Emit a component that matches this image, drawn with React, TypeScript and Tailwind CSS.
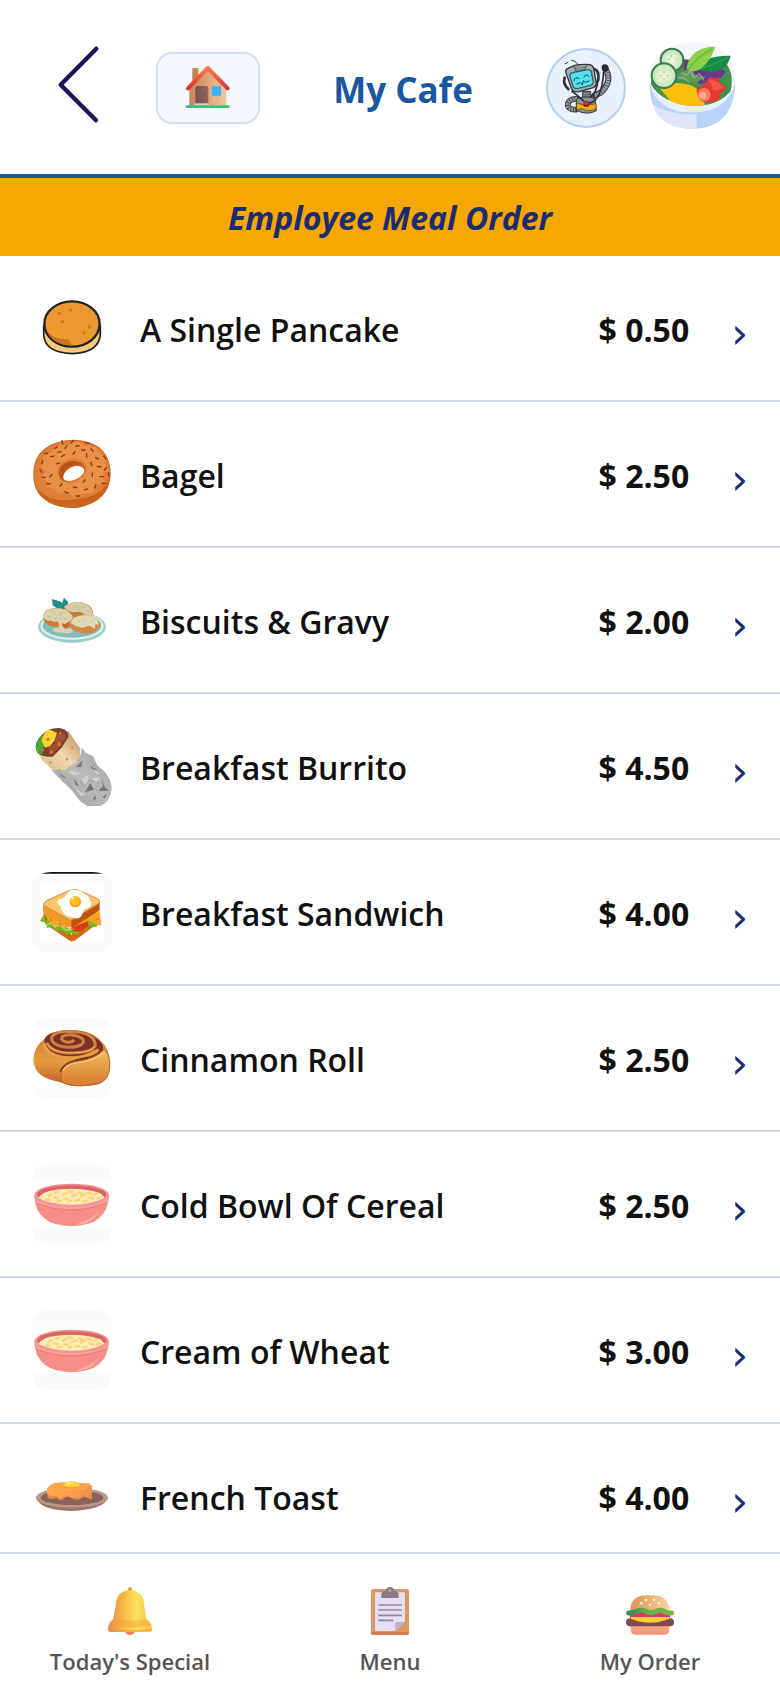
import type { ReactNode } from "react";

function BackIcon() {
  return (
    <svg viewBox="96 120 288 288" className="size-24" aria-hidden="true">
      <path d="M289 146 L182 254 L288 361" fill="none" stroke="#1c1458" strokeWidth="13" strokeLinecap="round" strokeLinejoin="round" />
    </svg>
  );
}

function HouseIcon() {
  return (
    <svg viewBox="554 192 144 144" className="size-12" aria-hidden="true">
      <defs>
        <linearGradient id="house-wall" x1="0" x2="1">
          <stop offset="0" stopColor="#c4865a" />
          <stop offset=".5" stopColor="#dfa47a" />
          <stop offset="1" stopColor="#edcaa4" />
        </linearGradient>
        <linearGradient id="house-roof" x1="0" y1="0" x2="0" y2="1">
          <stop offset="0" stopColor="#ff7a3c" />
          <stop offset="1" stopColor="#dc3238" />
        </linearGradient>
        <linearGradient id="house-door" x1="0" x2="1">
          <stop offset="0" stopColor="#7a5050" />
          <stop offset="1" stopColor="#93655a" />
        </linearGradient>
      </defs>
      <path d="M579 204 H597 V232 L579 248Z" fill="#bd8650" />
      <path d="M570 262 L625 208 L681 262 V317 H570Z" fill="url(#house-wall)" />
      <path d="M588 314 V265 q0 -7 7 -7 H620 q7 0 7 7 V314Z" fill="url(#house-door)" />
      <circle cx="617" cy="285" r="2" fill="#5b3a3c" />
      <path d="M586 310 H629 V317 H586Z" fill="#d9cfd6" />
      <rect x="635" y="257" width="31" height="31" rx="2" fill="#e9b890" />
      <rect x="637" y="259" width="28" height="28" rx="2" fill="#3bb2f5" />
      <path d="M566 265 L625 204 L685 265" fill="none" stroke="url(#house-roof)" strokeWidth="12" strokeLinecap="round" strokeLinejoin="round" />
      <rect x="559" y="316" width="132" height="8" rx="4" fill="#3ec46d" />
    </svg>
  );
}

function RobotIcon() {
  return (
    <svg viewBox="474 150 228 228" className="size-full" aria-hidden="true">
      <g strokeLinecap="round" strokeLinejoin="round">
        <path d="M564 197 Q562 184 545 181 M534 187 L526 191" fill="none" stroke="#33363b" strokeWidth="3" />
        <path d="M614 286 Q642 279 652 250 Q660 232 648 210" fill="none" stroke="#34363b" strokeWidth="18" />
        <path d="M614 286 Q642 279 652 250 Q660 232 648 210" fill="none" stroke="#a6a9ae" strokeWidth="12" strokeDasharray="6 2" strokeLinecap="butt" />
        <path d="M635 205 Q633 194 644 193 Q655 193 656 204 Q655 215 645 217 Q636 215 635 205Z" fill="#2c2e33" />
        <path d="M562 296 Q534 298 533 314 Q534 329 556 329" fill="none" stroke="#34363b" strokeWidth="17" />
        <path d="M562 296 Q534 298 533 314 Q534 329 556 329" fill="none" stroke="#94979c" strokeWidth="12" strokeDasharray="6 2" strokeLinecap="butt" />
        <path d="M560 297 Q588 283 615 297 L619 332 Q592 347 561 332Z" fill="#8e9095" stroke="#36383d" strokeWidth="3" />
        <path d="M560 309 L578 314 Q588 324 600 314 L618 311 V328 Q602 333 590 332 L577 326 L560 329Z" fill="#f0a90f" stroke="#4a3a20" strokeWidth="2" />
        <path d="M579 274 H602 V291 H579Z" fill="#777a80" stroke="#34363b" strokeWidth="3" />
        <path d="M524 233 Q518 252 535 267 M613 207 Q628 212 625 238 Q620 254 611 254" fill="none" stroke="#303237" strokeWidth="8" />
        <path d="M527 216 Q526 209 534 205 L554 196 Q576 192 599 194 Q609 196 611 205 L619 250 Q619 259 610 263 L567 275 Q551 278 545 267Z" fill="#a9acb1" stroke="#33363b" strokeWidth="4" />
        <path d="M539 226 Q540 219 548 218 L593 209 Q602 208 604 216 L610 246 Q609 254 602 256 L562 266 Q552 267 549 258Z" fill="#55e0ed" stroke="#2b6872" strokeWidth="4" />
        <path d="M552 200 L559 215 L583 210 L590 197" fill="#8c8f94" stroke="#44474c" strokeWidth="3" />
        <path d="M552 242 Q553 229 567 235 M582 231 Q588 219 597 229 M561 252 L571 248 L577 255 L580 242 L586 247 L597 243" fill="none" stroke="#174d5d" strokeWidth="3" />
        <path d="M546 274 Q566 288 580 302 M603 290 Q621 275 623 241 M597 310 Q636 302 641 216" fill="none" stroke="#292c31" strokeWidth="5" />
        <circle cx="589" cy="311" r="9" fill="#5b2a2c" />
        <circle cx="589" cy="310" r="6" fill="#ee2428" />
      </g>
    </svg>
  );
}

function SaladIcon() {
  return (
    <svg viewBox="738 96 336 336" className="size-28" aria-hidden="true">
      <defs>
        <clipPath id="salad-base"><path d="M779 246 Q776 384 908 387 Q1034 384 1036 244 Q1020 322 908 320 Q800 318 779 246Z" /></clipPath>
        <radialGradient id="cucumber"><stop offset="0" stopColor="#f4f8d9" /><stop offset=".6" stopColor="#d8edc9" /><stop offset="1" stopColor="#c4e5bd" /></radialGradient>
      </defs>
      <ellipse cx="908" cy="224" rx="128" ry="96" fill="#f6f5fa" />
      <path d="M782 252 Q790 182 870 178 L1004 184 Q1034 220 1022 273 Q985 320 905 318 Q815 309 782 252Z" fill="#41924e" />
      <path d="M878 178 L970 191 L1008 215 L989 239 L930 252 L884 220Z" fill="#6b3889" />
      <path d="M866 219 L901 206 L917 226 L947 230 L918 249 L868 239Z" fill="#5c9d4e" />
      <path d="M875 218 l15 9 l10 -16 l12 22 l16 -12 l14 21 M862 232 l20 2 l16 13" fill="none" stroke="#c4aad0" strokeWidth="3" />
      <path d="M917 211 Q938 165 1022 167 Q1010 213 969 215Z" fill="#168b47" />
      <path d="M925 209 Q966 196 1013 173" stroke="#45a759" strokeWidth="3" fill="none" />
      <path d="M889 207 Q899 140 976 140 Q954 205 908 215Z" fill="#8bd04b" />
      <path d="M896 208 Q921 170 967 146" stroke="#6ab63c" strokeWidth="4" fill="none" />
      <path d="M811 267 Q839 240 889 253 Q936 260 944 315 Q890 326 842 304Z" fill="#f9bf0b" />
      <path d="M947 251 Q956 224 974 236 L990 231 L989 246 L1011 264 L991 281 L989 296 Q966 312 939 306 Q918 286 920 266Z" fill="#e63b33" />
      <path d="M955 237 L982 245 L1004 263 L972 274Z" fill="#f25545" />
      <circle cx="942" cy="284" r="20" fill="#f67d62" />
      <circle cx="939" cy="286" r="11" fill="#ffab8c" />
      <circle cx="846" cy="180" r="37" fill="#367d52" />
      <circle cx="846" cy="180" r="31" fill="url(#cucumber)" />
      <circle cx="822" cy="227" r="40" fill="#367d52" />
      <circle cx="822" cy="227" r="34" fill="url(#cucumber)" />
      <path d="M822 213 v8 M822 233 v8 M809 227 h8 M828 227 h8 M844 165 v7 M834 177 h6 M857 178 h6" stroke="#a9c99d" strokeWidth="3" />
      <path d="M779 246 Q776 384 908 387 Q1034 384 1036 244 Q1020 322 908 320 Q800 318 779 246Z" fill="#b9d3fb" />
      <g clipPath="url(#salad-base)">
        <path d="M776 307 Q845 350 920 342 V400 H776Z" fill="#dfe5f8" />
        <path d="M779 248 Q800 339 910 337 Q1010 338 1038 247 V230 H779Z" fill="#e8effc" />
      </g>
    </svg>
  );
}

function PancakeIcon() {
  return (
    <svg viewBox="36 24 240 240" className="size-20" aria-hidden="true">
      <path d="M71 139 V163 Q73 218 156 221 Q237 218 241 163 V139Z" fill="#f5ca7c" stroke="#1f2320" strokeWidth="5" />
      <ellipse cx="156" cy="132" rx="83" ry="68" fill="#ec992f" stroke="#1f2320" strokeWidth="7" />
      <path d="M77 143 Q88 176 144 178 Q154 187 155 196 Q92 195 77 143Z" fill="#ca7425" />
      <g fill="#c97a27"><circle cx="152" cy="90" r="5" /><circle cx="117" cy="100" r="5" /><circle cx="127" cy="125" r="5" /><circle cx="208" cy="141" r="5" /><circle cx="192" cy="159" r="5" /></g>
    </svg>
  );
}

function BagelIcon() {
  const seeds = [
    [108, 503, -30], [138, 501, -50], [172, 498, 0], [201, 489, 10], [216, 510, 50], [190, 510, 0], [162, 519, -55],
    [129, 527, -35], [97, 529, -10], [67, 547, -70], [114, 550, -20], [200, 526, 85], [231, 535, 25], [214, 552, 75],
    [237, 560, 5], [254, 532, 50], [256, 567, -50], [217, 584, 90], [245, 590, 0], [193, 603, -55], [226, 619, -65],
    [198, 628, -20], [165, 622, 5], [123, 615, -50], [93, 587, -50], [63, 573, 55], [86, 611, 5], [139, 637, 25],
    [173, 648, 0], [71, 592, 0], [266, 583, 80], [251, 610, 0], [127, 487, 75], [157, 485, -50], [78, 520, 0], [118, 516, -10],
  ];
  return (
    <svg viewBox="36 462 240 240" className="size-20" aria-hidden="true">
      <path fillRule="evenodd" d="M40 588 Q37 514 106 488 Q176 467 232 498 Q273 526 272 585 Q268 664 176 683 Q93 690 55 640 Q40 615 40 588Z M130 588 Q126 605 155 603 Q191 595 193 574 Q192 557 165 558 Q135 567 130 588Z" fill="#c9631d" />
      <path fillRule="evenodd" d="M42 587 Q40 519 107 490 Q175 470 229 500 Q268 527 270 575 Q265 645 177 656 Q98 674 55 629 Q42 608 42 587Z M118 579 Q114 606 146 604 Q190 595 195 566 Q192 542 154 543 Q119 552 118 579Z" fill="#e07d38" />
      <path d="M62 559 L72 530 L94 516 L113 497 L145 494 L174 485 L203 500 L226 498 L234 517 L253 528 L255 549 L267 570 L249 579 L251 607 L230 618 L214 639 L181 642 L163 654 L145 637 L115 643 L104 626 L80 622 L84 605 L65 592 L78 574Z M110 574 Q114 607 149 611 Q193 600 202 569 Q196 535 154 534 Q119 543 110 574Z" fillRule="evenodd" fill="#ea9149" />
      <path d="M117 579 Q118 553 150 543 Q184 540 195 564 Q187 552 164 555 Q133 562 129 588 Q126 599 137 604 Q119 598 117 579Z" fill="#b95215" />
      <g stroke="#843b19" strokeWidth="4" strokeLinecap="round">
        {seeds.map(([x, y, r]) => <path key={`${x}-${y}`} d="M-5 0 H5" transform={`translate(${x} ${y}) rotate(${r})`} />)}
      </g>
    </svg>
  );
}

function BiscuitsIcon() {
  return (
    <svg viewBox="36 30 240 240" className="size-20" aria-hidden="true">
      <ellipse cx="156" cy="171" rx="102" ry="47" fill="#a3cbca" />
      <ellipse cx="156" cy="168" rx="95" ry="41" fill="#e0efec" />
      <ellipse cx="156" cy="167" rx="88" ry="36" fill="#82bdb9" />
      <path d="M96 87 L119 94 L126 99 L132 83 L145 97 L137 118 L111 115 L98 106Z" fill="#288b8b" />
      <path d="M133 110 Q150 94 180 96 Q222 104 219 135 Q188 150 143 136Z" fill="#c97a3b" />
      <path d="M132 110 Q151 94 181 96 Q219 105 218 136 Q205 142 195 134 Q181 122 166 127 Q145 128 132 110Z" fill="#d5cca5" />
      <path d="M70 135 Q75 111 119 114 Q156 121 158 148 Q151 172 117 172 Q76 170 70 148Z" fill="#d07a37" />
      <path d="M69 138 Q77 112 117 115 Q155 119 158 146 Q151 155 139 158 L132 176 Q158 172 158 182 Q154 193 130 188 Q103 189 97 180 Q101 172 116 174 V159 Q109 150 103 157 Q96 149 87 152 Q70 151 69 138Z" fill="#d9d1ac" />
      <path d="M126 158 Q132 166 146 158 L151 169 L137 176 L127 169Z" fill="#c46c2d" />
      <path d="M150 156 Q161 133 201 135 Q237 143 240 166 Q236 188 196 191 Q158 188 151 169Z" fill="#d68542" />
      <path d="M151 158 Q162 133 201 136 Q236 143 237 164 L226 163 L224 178 L215 170 Q202 165 190 173 Q168 171 151 158Z" fill="#dfd8b4" />
      <g fill="#aaa379"><circle cx="99" cy="124" r="2" /><circle cx="123" cy="132" r="2" /><circle cx="88" cy="140" r="2" /><circle cx="136" cy="147" r="2" /><circle cx="107" cy="146" r="2" /><circle cx="170" cy="108" r="2" /><circle cx="191" cy="112" r="2" /><circle cx="204" cy="124" r="2" /><circle cx="177" cy="119" r="2" /><circle cx="177" cy="154" r="2" /><circle cx="195" cy="148" r="2" /><circle cx="216" cy="155" r="2" /></g>
    </svg>
  );
}

function BurritoIcon() {
  return (
    <svg viewBox="36 468 240 240" className="size-20" aria-hidden="true">
      <defs>
        <linearGradient id="foil" x1="0" y1="1" x2="1" y2="0"><stop offset="0" stopColor="#929292" /><stop offset=".5" stopColor="#bbbbbb" /><stop offset="1" stopColor="#a3a3a3" /></linearGradient>
        <linearGradient id="wrap" x1="0" y1="1" x2="1" y2="0"><stop offset="0" stopColor="#d6b67c" /><stop offset=".5" stopColor="#f1d9ae" /><stop offset="1" stopColor="#b88d5b" /></linearGradient>
      </defs>
      <path d="M94 600 L113 597 L145 588 L181 557 L186 532 L197 548 L219 559 L232 586 L253 604 Q271 625 275 650 Q276 690 242 708 H202 L180 693 L154 659 L126 633Z" fill="url(#foil)" />
      <path d="M47 530 Q48 514 67 494 L145 483 L181 536 L180 558 L168 578 L146 590 L133 603 L117 596 L101 602 L66 571Z" fill="url(#wrap)" />
      <path d="M48 525 Q48 510 75 486 Q90 474 119 474 Q147 480 145 501 L126 532 L98 560 Q72 563 53 550Z" fill="#76402c" />
      <path d="M47 529 Q50 508 70 494 L72 524 L66 553 Q47 552 47 529Z" fill="#46a735" />
      <path d="M65 514 Q68 490 86 478 L111 488 L104 511 L90 529 L75 533Z" fill="#f9d42f" />
      <path d="M104 510 Q112 486 128 488 Q145 500 133 512 Q121 522 108 520Z M83 537 Q94 521 114 519 L123 526 L98 550Z" fill="#9e4f35" />
      <g fill="#ee642b"><circle cx="84" cy="508" r="5" /><circle cx="118" cy="523" r="6" /><circle cx="94" cy="546" r="6" /><circle cx="120" cy="490" r="4" /><circle cx="69" cy="540" r="4" /></g>
      <g fill="#d4926b"><circle cx="92" cy="578" r="4" /><circle cx="141" cy="568" r="4" /><circle cx="156" cy="533" r="4" /></g>
      <path d="M116 608 L139 624 L128 622Z M167 592 L188 570 L184 591Z M207 587 L224 603 L233 600Z M195 667 L211 638 L222 659Z M235 663 L249 647 L245 625 L254 650 L266 662Z M161 624 L177 648 L167 646Z M218 690 L225 676 L229 687Z M246 681 L261 671 L255 685Z" fill="#777777" />
      <path d="M144 605 L163 599 L181 611 L163 617Z M184 628 L206 615 L200 646Z M216 625 L239 622 L228 640Z M157 640 L180 665 L199 672 L181 677Z M220 596 L242 611 L229 613Z" fill="#cfcfcf" />
      <path d="M154 596 L168 607 L187 588 M180 630 L190 651 L211 630 L237 640 L225 656 L249 684 M212 572 L224 590" fill="none" stroke="#999999" strokeWidth="2" />
    </svg>
  );
}

function SandwichIcon() {
  return (
    <svg viewBox="36 66 240 240" className="size-20" aria-hidden="true">
      <rect x="36" y="68" width="240" height="238" rx="42" fill="#fafafa" />
      <path d="M64 71 Q78 66 94 66 H218 Q235 66 248 71Z" fill="#111111" />
      <rect x="61" y="98" width="191" height="180" fill="white" />
      <path d="M71 194 L152 244 L157 274 L147 271 L76 222Z M157 244 L239 202 L234 220 L164 272 L151 275Z" fill="#d66b17" />
      <path d="M60 213 L73 191 L90 205 L154 239 L224 193 L243 212 L229 231 L205 229 L198 243 L184 237 L173 254 L153 248 L141 256 L130 242 L106 244 L103 231 L80 233 L80 219Z" fill="#76b926" />
      <path d="M80 224 L94 218 L105 231 L119 223 L137 240 L157 238 L187 219 L204 230" fill="none" stroke="#b8da54" strokeWidth="5" />
      <path d="M74 193 L84 199 L78 216Z M149 235 L202 211 L204 230 L182 243 Z" fill="#e43b20" />
      <path d="M74 193 L154 223 L239 183 L244 228 L203 213 L160 231 L133 233 L116 225 L103 226 L86 212Z" fill="#f7a421" />
      <g fill="#db6d18"><circle cx="93" cy="210" r="3" /><circle cx="120" cy="222" r="3" /><circle cx="233" cy="207" r="3" /></g>
      <path d="M152 243 L203 216 L206 228 L180 245Z" fill="#d93a18" />
      <path d="M70 167 L154 207 L239 155 V181 L160 232 L71 193Z" fill="#bd570f" />
      <path d="M70 167 L154 207 V231 L71 193Z" fill="#ee9828" />
      <path d="M70 165 Q70 158 82 151 L146 122 Q163 114 177 121 L230 145 Q241 149 239 159 L158 208 Q151 214 144 207Z" fill="#f8c76c" stroke="#d98a2d" strokeWidth="3" />
      <path d="M114 149 Q128 149 139 135 Q147 115 165 119 Q186 121 197 134 Q208 137 209 151 L215 160 Q212 175 193 177 L184 199 Q173 211 158 202 L140 198 Q122 184 122 169 Q109 163 114 149Z" fill="#fffdf7" />
      <circle cx="166" cy="155" r="17" fill="#f4a50f" /><circle cx="164" cy="152" r="13" fill="#ffc321" /><circle cx="158" cy="145" r="4" fill="#fff0a8" />
    </svg>
  );
}

function CinnamonIcon() {
  return (
    <svg viewBox="36 504 240 240" className="size-20" aria-hidden="true">
      <defs>
        <linearGradient id="roll" x1="0" y1="0" x2="0" y2="1"><stop offset="0" stopColor="#c97434" /><stop offset=".55" stopColor="#e89b40" /><stop offset="1" stopColor="#b95d28" /></linearGradient>
        <linearGradient id="roll-end" x1="0" y1="0" x2="0" y2="1"><stop offset="0" stopColor="#f2bb5e" /><stop offset="1" stopColor="#d77c30" /></linearGradient>
      </defs>
      <path d="M39 537 Q51 504 84 504 H228 Q261 504 273 537Z M39 716 H273 Q260 744 228 744 H84 Q54 744 39 716Z" fill="#fafafa" />
      <path d="M40 631 Q40 590 74 566 Q99 540 160 540 Q218 543 242 573 Q269 594 270 639 Q272 687 235 703 Q165 717 119 696 Q43 684 40 631Z" fill="url(#roll)" />
      <path d="M74 579 Q68 552 116 544 Q187 534 221 560 Q252 578 239 600 Q213 624 151 619 Q84 617 74 579Z" fill="#7b3023" />
      <path d="M80 578 Q98 613 158 609 Q218 607 226 587 Q225 551 169 546 Q112 540 97 558 Q88 577 119 588 Q158 598 185 583 Q199 569 176 560 Q148 549 128 559 Q119 569 136 575 Q151 580 163 570" fill="none" stroke="#cf8140" strokeWidth="9" />
      <path d="M83 585 Q106 610 158 608 Q217 608 224 588" fill="none" stroke="#f6b66b" strokeWidth="3" />
      <path d="M72 581 Q78 611 124 622 Q182 631 235 599" fill="none" stroke="#e7a044" strokeWidth="9" />
      <path d="M231 571 Q266 602 214 622 L168 632 Q130 642 122 665" fill="none" stroke="#79301e" strokeWidth="8" />
      <path d="M123 682 Q123 638 175 633 Q224 628 253 598 Q272 616 269 653 Q265 691 239 699 Q178 715 135 701 Q122 695 123 682Z" fill="url(#roll-end)" stroke="#bb6229" strokeWidth="3" />
      <path d="M128 662 Q142 640 181 637 Q227 631 253 607" fill="none" stroke="#f8ce7b" strokeWidth="4" />
    </svg>
  );
}

function CerealIcon() {
  return (
    <svg viewBox="36 72 240 240" className="size-20" aria-hidden="true">
      <path d="M36 124 V114 Q40 72 84 72 H228 Q272 72 276 114 V124Z M36 262 H276 Q274 312 228 312 H84 Q38 312 36 262Z" fill="#fafafa" />
      <path d="M43 166 Q45 257 156 259 Q263 257 267 166Z" fill="#f68d86" />
      <path d="M43 166 Q155 236 267 166 L262 187 Q155 231 50 189Z" fill="#f7a29e" />
      <path d="M51 191 Q155 230 259 190" fill="none" stroke="#ed7775" strokeWidth="3" />
      <path d="M175 250 Q218 237 237 214 Q221 250 175 255Z" fill="#fab09b" />
      <ellipse cx="155" cy="166" rx="112" ry="35" fill="#f39591" />
      <ellipse cx="155" cy="163" rx="104" ry="27" fill="#da6460" />
      <path d="M55 174 Q67 153 110 149 Q187 140 241 160 L254 173 Q210 195 155 194 Q94 194 55 174Z" fill="#ffecbb" />
      <g stroke="#ffd374" strokeWidth="7" strokeLinecap="round">
        <path d="M86 168l9-5 M78 179l11 1 M105 158l13-2 M103 171l11 4 M112 184l14-3 M128 164l12-5 M133 175l10 2 M145 186l9-4 M145 154l12 2 M156 168l13-4 M166 182l13-2 M176 157l10 4 M182 169l13-5 M188 185l12-3 M202 158l12 3 M207 172l13 4 M222 164l9-4 M231 175l9-3" />
      </g>
    </svg>
  );
}

function ToastIcon() {
  return (
    <svg viewBox="36 168 240 240" className="size-20" aria-hidden="true">
      <defs><linearGradient id="toast" x1="0" x2="1"><stop offset="0" stopColor="#ffad4b" /><stop offset="1" stopColor="#ef914f" /></linearGradient></defs>
      <path d="M48 289 Q54 331 153 333 Q255 329 264 291Z" fill="#9a7468" />
      <ellipse cx="156" cy="293" rx="108" ry="30" fill="#b99686" />
      <ellipse cx="156" cy="293" rx="94" ry="22" fill="#8b6358" />
      <path d="M81 280 V267 Q90 254 104 250 Q163 241 216 257 V284 Q219 304 207 296 Q193 285 181 297 Q166 304 149 291 Q133 290 126 300 Q119 303 109 293 Q91 302 83 292Z" fill="#e58a48" />
      <path d="M82 270 Q90 252 106 250 Q159 242 216 257 V278 L205 291 Q189 279 176 294 Q151 296 143 285 Q130 287 123 296 L108 287 Q89 291 81 280Z" fill="url(#toast)" />
      <path d="M84 268 Q91 254 106 250 H213 L197 268 Q143 277 84 268Z" fill="#ffa44c" />
      <ellipse cx="153" cy="257" rx="28" ry="9" fill="#eca22a" />
      <path d="M127 257 Q134 244 153 243 Q173 243 181 257 Q155 267 127 257Z" fill="#ffcf3d" />
      <ellipse cx="148" cy="249" rx="11" ry="4" fill="#ffe878" />
    </svg>
  );
}

function BellIcon() {
  return (
    <svg viewBox="258 561 144 144" className="size-12" aria-hidden="true">
      <defs><linearGradient id="bell"><stop offset="0" stopColor="#e58b54" /><stop offset=".3" stopColor="#f6b240" /><stop offset=".65" stopColor="#ffe15b" /><stop offset="1" stopColor="#f8c243" /></linearGradient></defs>
      <path d="M314 693 Q318 705 330 705 Q342 705 346 693Z" fill="#e9826c" />
      <path d="M324 575 V566 q0 -5 6 -5 q6 0 6 5 V575Z" fill="#e8a13d" />
      <path d="M288 610 Q291 573 330 571 Q368 573 372 610 L379 657 Q396 669 396 688 Q396 696 388 696 H272 Q264 696 264 688 Q264 669 280 657Z" fill="url(#bell)" />
      <path d="M279 657 Q330 667 380 657 Q390 666 395 676 Q330 690 266 676Z" fill="#ef9e38" opacity=".4" />
      <path d="M265 690 Q330 696 396 690" fill="none" stroke="#e98a4d" strokeWidth="4" opacity=".6" />
    </svg>
  );
}

function ClipboardIcon() {
  return (
    <svg viewBox="78 141 144 144" className="size-12" aria-hidden="true">
      <rect x="93" y="147" width="114" height="138" rx="7" fill="#df965f" />
      <path d="M93 276 V279 q0 6 7 6 H200 q7 0 7 -7 V276Z" fill="#cf7e59" />
      <path d="M105 161 q0 -4 4 -4 H191 q4 0 4 4 V246 L166 273 H109 q-4 0 -4 -4Z" fill="#e7def2" />
      <path d="M166 246 H195 L166 273Z" fill="#beb3cb" />
      <path d="M115 195 H185 M115 210 H185 M115 226 H185 M115 241 H160" stroke="#9288a0" strokeWidth="5" />
      <path d="M124 174 V162 q2 -9 13 -10 q2 -11 13 -11 q11 0 13 11 q12 1 13 10 V174Z" fill="#857a88" />
      <circle cx="150" cy="152" r="4" fill="#d7a582" />
    </svg>
  );
}

function BurgerIcon() {
  return (
    <svg viewBox="858 141 144 144" className="size-12" aria-hidden="true">
      <defs><linearGradient id="bun"><stop offset="0" stopColor="#d99359" /><stop offset="1" stopColor="#ffd198" /></linearGradient><linearGradient id="lettuce"><stop offset="0" stopColor="#3c875b" /><stop offset=".4" stopColor="#5fb24a" /><stop offset="1" stopColor="#77b541" /></linearGradient><linearGradient id="bun-low" x1="0" y1="0" x2="0" y2="1"><stop offset="0" stopColor="#f3b27e" /><stop offset="1" stopColor="#ef9184" /></linearGradient></defs>
      <path d="M872 256 H988 V270 Q987 284 973 284 H887 Q873 284 872 270Z" fill="url(#bun-low)" />
      <path d="M870 216 H990 V234 H870Z" fill="#df3563" />
      <rect x="858" y="235" width="144" height="24" rx="12" fill="#814b4b" />
      <path d="M873 231 H988 V236 Q958 248 930 248 Q900 248 873 237Z" fill="#f8d036" />
      <path d="M871 216 Q870 166 919 166 H942 Q988 168 989 216Z" fill="url(#bun)" />
      <path d="M866 219 Q879 219 890 214 Q905 207 923 216 Q935 222 948 214 Q963 207 979 217 Q987 220 995 219" fill="none" stroke="url(#lettuce)" strokeWidth="15" strokeLinecap="round" />
      <g fill="#fff0da"><circle cx="918" cy="180" r="4" /><circle cx="942" cy="180" r="4" /><circle cx="904" cy="190" r="4" /><circle cx="930" cy="195" r="4" /><circle cx="957" cy="190" r="4" /></g>
    </svg>
  );
}

type MenuItem = { name: string; price: string; icon: ReactNode };

const items: MenuItem[] = [
  { name: "A Single Pancake", price: "0.50", icon: <PancakeIcon /> },
  { name: "Bagel", price: "2.50", icon: <BagelIcon /> },
  { name: "Biscuits & Gravy", price: "2.00", icon: <BiscuitsIcon /> },
  { name: "Breakfast Burrito", price: "4.50", icon: <BurritoIcon /> },
  { name: "Breakfast Sandwich", price: "4.00", icon: <SandwichIcon /> },
  { name: "Cinnamon Roll", price: "2.50", icon: <CinnamonIcon /> },
  { name: "Cold Bowl Of Cereal", price: "2.50", icon: <CerealIcon /> },
  { name: "Cream of Wheat", price: "3.00", icon: <CerealIcon /> },
  { name: "French Toast", price: "4.00", icon: <ToastIcon /> },
];

const tabs = [
  { label: "Today's Special", icon: <BellIcon /> },
  { label: "Menu", icon: <ClipboardIcon /> },
  { label: "My Order", icon: <BurgerIcon /> },
];

export default function App() {
  return (
    <div className="flex h-dvh flex-col bg-white font-['Segoe_UI','Open_Sans','Noto_Sans',sans-serif] text-[#111111]">
      <header className="flex shrink-0 items-center justify-between border-b-4 border-[#1a57a0] px-8 pt-8 pb-[30px]">
        <div className="flex items-center gap-7">
          <button type="button" aria-label="Back">
            <BackIcon />
          </button>
          <button type="button" aria-label="Home" className="flex h-[72px] w-[104px] items-center justify-center rounded-2xl border-2 border-[#cfdff5] bg-[#f5f8ff]">
            <HouseIcon />
          </button>
        </div>
        <h1 className="pt-1 text-[35px] leading-10 font-bold text-[#1a57a0]">My Cafe</h1>
        <div className="flex items-center gap-[10px]">
          <button type="button" aria-label="Assistant" className="size-20 overflow-hidden rounded-full border-2 border-[#b3cff5] bg-[#e8f0fc]">
            <RobotIcon />
          </button>
          <SaladIcon />
        </div>
      </header>
      <h2 className="shrink-0 bg-[#f6a800] pt-5 pb-[18px] text-center text-[32px] leading-10 font-bold text-[#1b2c74] italic">
        Employee Meal Order
      </h2>
      <main className="min-h-0 flex-1 overflow-y-auto [scrollbar-width:none]">
        <ul>
          {items.map((item) => (
            <li key={item.name} className="border-b-2 border-[#cdd8e8]">
              <button type="button" className="flex w-full items-center px-8 py-8 text-left">
                {item.icon}
                <span className="ml-7 flex-1 pt-1 text-[32px] leading-10 font-semibold">{item.name}</span>
                <span className="pt-1 text-[32px] leading-10 font-bold">$ {item.price}</span>
                <span className="ml-[42px] pt-3 font-['DejaVu_Sans',sans-serif] text-[42px] leading-10 text-[#1b2c74]" aria-hidden="true">›</span>
              </button>
            </li>
          ))}
        </ul>
      </main>
      <nav className="grid shrink-0 grid-cols-3 border-t-2 border-[#cdd8e8] bg-white">
        {tabs.map((tab) => (
          <button key={tab.label} type="button" className="flex flex-col items-center gap-[10px] pt-[33px] pb-[11px] text-[22px] leading-8 font-semibold text-[#555555]">
            {tab.icon}
            {tab.label}
          </button>
        ))}
      </nav>
    </div>
  );
}
